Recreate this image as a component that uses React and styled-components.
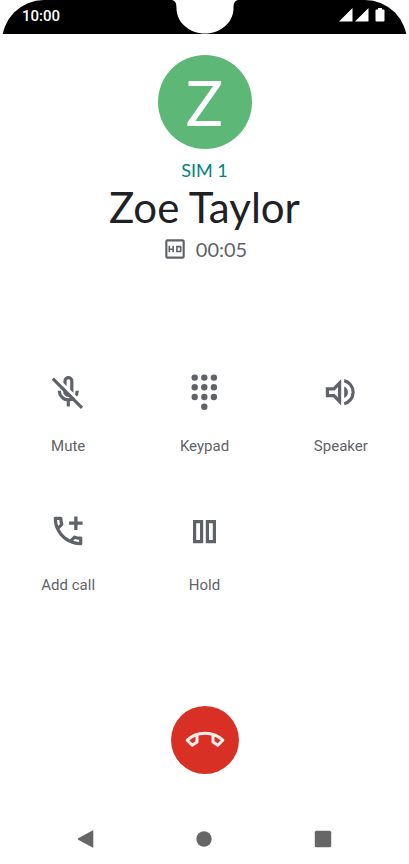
import React from "react";
import styled, { createGlobalStyle } from "styled-components";
import { MdOutlineHd } from "react-icons/md";

const MuteIcon = () => (
  <Icon viewBox="0 0 40 40">
    <g fill="none" stroke="currentColor" strokeWidth="3.2">
      <path d="M17 22V9a3.4 3.4 0 0 1 6.8 0v11a3.4 3.4 0 0 1-6.8 0" />
      <path d="M11.3 18.7a9 9.2 0 0 0 18 0M20.3 27.5v7" />
      <path stroke="#fff" strokeWidth="3" d="M6.6 4.2l29.6 29.6" />
      <path d="M4.8 6.6l29.2 29.2" />
    </g>
  </Icon>
);

const KeypadIcon = () => (
  <Icon viewBox="0 0 40 40">
    {[5.6, 15.3, 25].map(y =>
      [10.7, 20.3, 29.9].map(x => <circle key={`${x}-${y}`} cx={x} cy={y} r="3.2" />)
    )}
    <circle cx="20.3" cy="34.7" r="3.2" />
  </Icon>
);

const SpeakerIcon = () => (
  <Icon viewBox="0 0 40 40">
    <path
      fillRule="evenodd"
      d="M4.8 15.2h7.4L20.2 7v26.4l-8-8.2H4.8zM8 18.4v3.6h5.6l3.4 3.4V15l-3.4 3.4z"
    />
    <path d="M23.2 14.4a6.4 6.4 0 0 1 0 11.6z" />
    <path
      fill="none"
      stroke="currentColor"
      strokeWidth="3.2"
      d="M23.2 8.6a12 12 0 0 1 0 23.2"
    />
  </Icon>
);

const AddCallIcon = () => (
  <Icon viewBox="-.6 -.6 25.2 25.2">
    <path d="M6.54 5c.06.89.21 1.76.45 2.59l-1.2 1.2c-.41-1.2-.67-2.47-.76-3.79h1.51m9.86 12.02c.85.24 1.72.39 2.6.45v1.49c-1.32-.09-2.59-.35-3.8-.75l1.2-1.19M7.5 3H4c-.55 0-1 .45-1 1 0 9.39 7.61 17 17 17 .55 0 1-.45 1-1v-3.49c0-.55-.45-1-1-1-1.24 0-2.45-.2-3.57-.57a.84.84 0 0 0-.31-.05c-.26 0-.51.1-.71.29l-2.2 2.2a15.149 15.149 0 0 1-6.59-6.59l2.2-2.2c.28-.28.36-.67.25-1.02A11.36 11.36 0 0 1 8.5 4c0-.55-.45-1-1-1z" />
    <path d="M15.9 2.8H18V6h3.2v2.1H18v3.2h-2.1V8.1h-3.2V6h3.2z" />
  </Icon>
);

const HoldIcon = () => (
  <Icon viewBox="0 0 40 40">
    <g fill="none" stroke="currentColor" strokeWidth="3.2">
      <path d="M10.6 10.6h7v20h-7zM23.4 10.6h7v20h-7z" />
    </g>
  </Icon>
);

const EndCallIcon = () => (
  <Icon viewBox="0 0 40 40">
    <path
      fill="none"
      stroke="currentColor"
      strokeWidth="3"
      strokeLinejoin="round"
      d="M12 14.6v7.4L7.2 25.2 2.2 20.2C7 15.6 13 13.2 20 13.2s13 2.4 17.8 7L32.8 25.2 28 22v-7.4"
    />
  </Icon>
);

const actions = [
  { label: "Mute", icon: MuteIcon },
  { label: "Keypad", icon: KeypadIcon },
  { label: "Speaker", icon: SpeakerIcon },
  { label: "Add call", icon: AddCallIcon },
  { label: "Hold", icon: HoldIcon }
];

const App = () => {
  return (
    <CallScreen>
      <GlobalStyle />
      <StatusBar>
        <Clock>10:00</Clock>
        <Notch viewBox="0 0 66 34" aria-hidden="true">
          <path d="M0 0C4 1 4.5 4 4.5 9C5 23 18 33.6 33 33.6S61 23 61.5 9C61.5 4 62 1 66 0z" />
        </Notch>
        <StatusIcons viewBox="0 0 46 14" aria-hidden="true">
          <path d="M0 13.5L13.5 0v13.5zM16 13.5L29.5 0v13.5z" />
          <path d="M39 0h4v1.5h1.5q1 0 1 1v10q0 1-1 1h-7q-1 0-1-1v-10q0-1 1-1H39z" />
        </StatusIcons>
      </StatusBar>

      <Caller>
        <Avatar>Z</Avatar>
        <SimName>SIM 1</SimName>
        <h1>Zoe Taylor</h1>
        <CallTime>
          <MdOutlineHd aria-hidden="true" />
          <span>00:05</span>
        </CallTime>
      </Caller>

      <Actions>
        {actions.map(({ label, icon: ActionIcon }) => (
          <ActionButton key={label} type="button">
            <ActionIcon />
            <span>{label}</span>
          </ActionButton>
        ))}
      </Actions>

      <EndCall type="button" aria-label="End call">
        <EndCallIcon />
      </EndCall>

      <NavBar>
        <NavButton type="button" aria-label="Back">
          <svg viewBox="0 0 18 18">
            <path d="M1.2 8.3L15.5.4q.8-.4.8.6v16q0 1-.8.6L1.2 9.7q-1-.7 0-1.4z" />
          </svg>
        </NavButton>
        <NavButton type="button" aria-label="Home">
          <svg viewBox="0 0 18 18">
            <circle cx="9" cy="9" r="7.7" />
          </svg>
        </NavButton>
        <NavButton type="button" aria-label="Recent apps">
          <svg viewBox="0 0 18 18">
            <rect x=".8" y=".8" width="16.4" height="16.4" rx="1.5" />
          </svg>
        </NavButton>
      </NavBar>
    </CallScreen>
  );
};

export default App;

const GlobalStyle = createGlobalStyle`
  * {
    box-sizing: border-box;
  }
  body {
    margin: 0;
    background: #fff;
    font-family: Roboto, sans-serif;
  }
  button {
    padding: 0;
    border: none;
    background: none;
    color: inherit;
    font: inherit;
    cursor: pointer;
  }
`;

const CallScreen = styled.div`
  display: flex;
  flex-direction: column;
  align-items: center;
  min-height: 100vh;
  color: #5f6368;
`;

const StatusBar = styled.header`
  position: relative;
  display: grid;
  grid-template-columns: 1fr auto 1fr;
  align-self: stretch;
  height: 34px;
  margin: 0 2px;
  padding: 0 20px;
  overflow: hidden;
  color: #fff;
  &::before {
    content: "";
    position: absolute;
    inset: 0 0 -12px;
    z-index: -1;
    background: #000;
    border-radius: 42px 42px 0 0;
  }
`;

const Clock = styled.time`
  font-size: 15px;
  font-weight: 500;
  line-height: 32px;
`;

const Notch = styled.svg`
  width: 66px;
  height: 34px;
  fill: #fff;
`;

const StatusIcons = styled.svg`
  justify-self: end;
  width: 46px;
  height: 14px;
  margin: 8px 2px 0 0;
  fill: #fff;
`;

const Caller = styled.section`
  display: flex;
  flex-direction: column;
  align-items: center;
  margin-top: 21px;
  font-family: Lato, sans-serif;
  h1 {
    margin: 0;
    color: #202124;
    font-size: 42px;
    font-weight: 400;
    line-height: 50px;
  }
`;

const Avatar = styled.div`
  display: flex;
  justify-content: center;
  align-items: center;
  width: 94px;
  height: 94px;
  border-radius: 50%;
  background: #5db877;
  color: #fff;
  font-size: 62px;
  line-height: 94px;
`;

const SimName = styled.div`
  margin-top: 9px;
  color: #00857a;
  font-size: 18px;
  line-height: 24px;
`;

const CallTime = styled.div`
  display: flex;
  align-items: center;
  gap: 8px;
  margin-top: 4px;
  font-size: 20px;
  line-height: 26px;
  svg {
    width: 26px;
    height: 26px;
  }
`;

const Actions = styled.section`
  display: grid;
  grid-template-columns: repeat(3, 1fr);
  row-gap: 56px;
  align-self: stretch;
  margin-top: 110px;
`;

const ActionButton = styled.button`
  display: flex;
  flex-direction: column;
  align-items: center;
  gap: 25px;
  font-size: 15px;
  line-height: 18px;
`;

const Icon = styled.svg`
  width: 40px;
  height: 40px;
  fill: currentColor;
`;

const EndCall = styled.button`
  display: flex;
  justify-content: center;
  align-items: center;
  width: 68px;
  height: 68px;
  margin-top: 112px;
  && {
    border-radius: 50%;
    background: #d93025;
    color: #fdeeec;
  }
`;

const NavBar = styled.nav`
  display: grid;
  grid-template-columns: repeat(3, 1fr);
  align-self: stretch;
  margin-top: auto;
  padding: 0 27px;
`;

const NavButton = styled.button`
  display: flex;
  justify-content: center;
  align-items: center;
  height: 51px;
  svg {
    width: 18px;
    height: 18px;
    fill: #666;
  }
`;
